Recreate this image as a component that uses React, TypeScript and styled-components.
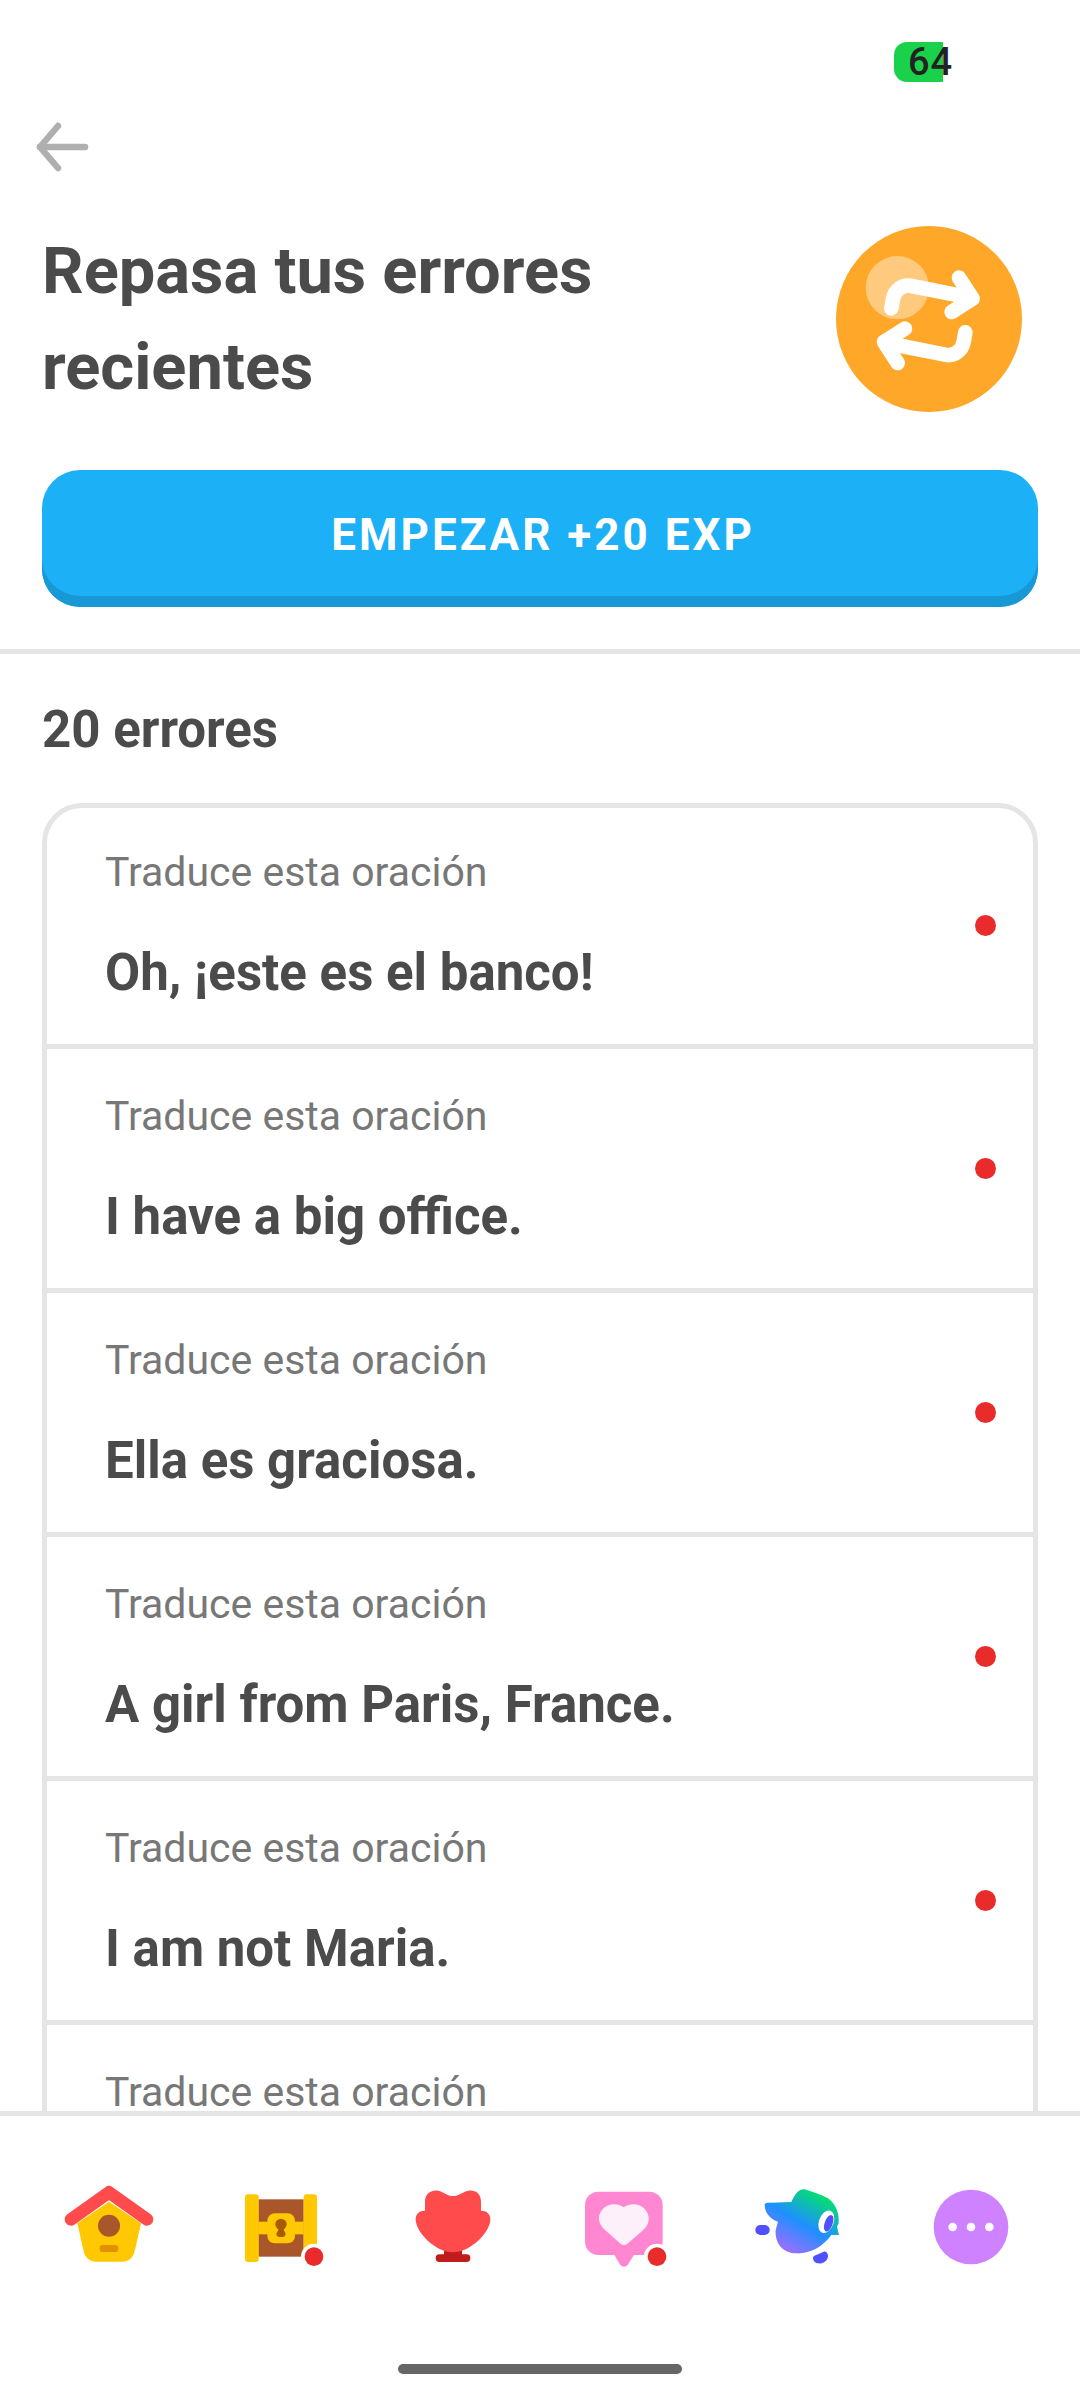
import React from "react";
import styled, { createGlobalStyle } from "styled-components";

const Global = createGlobalStyle`
  html, body { margin: 0; padding: 0; background: #fff; }
  * { box-sizing: border-box; }
`;

const Page = styled.div`
  width: 1080px;
  height: 2400px;
  display: flex;
  flex-direction: column;
  overflow: hidden;
  background: #fff;
  font-family: "Roboto", sans-serif;
  color: #4b4b4b;
`;

const StatusBar = styled.div`
  height: 122px;
  padding: 42px 0 0 894px;
`;

const Battery = styled.div`
  width: 49px;
  height: 40px;
  border-radius: 13px 0 0 13px;
  background: #1ad14b;
  padding-left: 14px;
  font: 500 38px/40px "Roboto", sans-serif;
  letter-spacing: 1px;
  color: #222;
  white-space: nowrap;
`;

const BackRow = styled.div`
  height: 104px;
  padding-left: 36px;
`;

const Hero = styled.div`
  display: flex;
  justify-content: space-between;
  padding: 0 58px 0 42px;
  height: 244px;
`;

const Title = styled.h1`
  margin: -3px 0 0;
  font-size: 65px;
  line-height: 96px;
  font-weight: 700;
`;

const PrimaryButton = styled.button`
  display: block;
  width: 996px;
  height: 137px;
  margin: 0 0 0 42px;
  padding: 0 0 7px 6px;
  border: 0;
  border-radius: 38px;
  background: #1cb0f6;
  box-shadow: inset 0 -11px 0 #1899d6;
  font-family: inherit;
  font-size: 44px;
  font-weight: 700;
  letter-spacing: 3px;
  color: #fff;
`;

const Divider = styled.div`
  height: 5px;
  margin-top: 42px;
  background: #e5e5e5;
  flex: none;
`;

const Scroll = styled.main`
  flex: 1;
  min-height: 0;
  overflow: hidden;
  padding: 48px 42px 0;
`;

const Count = styled.h2`
  margin: 0 0 45px;
  font-size: 51px;
  line-height: 56px;
  font-weight: 700;
`;

const List = styled.div`
  width: 996px;
  border: 5px solid #e5e5e5;
  border-radius: 40px;
`;

const RowText = styled.div`
  display: flex;
  flex-direction: column;
  align-self: flex-start;
  padding-top: 39px;
  gap: 45px;
`;

const Dot = styled.span`
  width: 21px;
  height: 21px;
  border-radius: 50%;
  background: #ea2b2b;
`;

const Row = styled.div`
  height: 244px;
  display: flex;
  align-items: center;
  justify-content: space-between;
  padding: 0 37px 0 58px;
  border-bottom: 5px solid #e5e5e5;

  &:first-child {
    height: 241px;
  }
  &:first-child ${RowText} {
    padding-top: 36px;
  }
  &:first-child ${Dot} {
    margin-bottom: 2px;
  }
`;

const RowLabel = styled.div`
  font-size: 41px;
  line-height: 56px;
  font-weight: 400;
  color: #777;
`;

const RowTitle = styled.div`
  font-size: 51px;
  line-height: 56px;
  font-weight: 700;
`;

const BottomNav = styled.nav`
  flex: none;
  height: 289px;
  border-top: 5px solid #e5e5e5;
  background: #fff;
  padding-top: 57px;
`;

const Tabs = styled.div`
  display: grid;
  grid-template-columns: repeat(6, 1fr);
  padding: 0 23px;
`;

const Tab = styled.div`
  height: 100px;
  display: flex;
  justify-content: center;
`;

const HomeBar = styled.div`
  width: 284px;
  height: 10px;
  margin: 91px auto 0;
  border-radius: 5px;
  background: #666;
`;

const Badge = ({ cx, cy }: { cx: number; cy: number }) => (
  <>
    <circle cx={cx} cy={cy} r="39" fill="#fff" />
    <circle cx={cx} cy={cy} r="28" fill="#ea2b2b" />
  </>
);

const BackIcon = () => (
  <svg width="56" height="56" viewBox="0 0 56 56" fill="none" stroke="#afafaf" strokeWidth="6.5" strokeLinecap="round" strokeLinejoin="round">
    <path d="M4 25 H49" />
    <path d="M22 4 L4 25 L22 46" />
  </svg>
);

const arrowPaths = (
  <>
    <path d="M274 864 L279 836 C284 810 306 791 335 797 L495 829" />
    <path d="M477 772 L518 835 L455 875" />
  </>
);

const RepeatIcon = () => (
  <svg width="186" height="186" viewBox="108 617 558 558">
    <circle cx="387" cy="896" r="279" fill="#ffa729" />
    <circle cx="292" cy="802" r="95" fill="#fff" fillOpacity="0.4" />
    <g fill="none" stroke="#fff" strokeWidth="44" strokeLinecap="round" strokeLinejoin="round">
      {arrowPaths}
    </g>
    <g transform="rotate(180 385 900)" fill="none" stroke="#fff" strokeWidth="44" strokeLinecap="round" strokeLinejoin="round">
      {arrowPaths}
    </g>
  </svg>
);

const HomeIcon = () => (
  <svg width="100" height="100" viewBox="177 249 300 300">
    <path d="M232 400 L327 335 L423 400 L405 480 C400 502 388 515 367 515 H288 C267 515 255 502 250 480 Z" fill="#ffc800" />
    <circle cx="327" cy="407" r="33" fill="#a9572a" />
    <rect x="299" y="465" width="56" height="21" rx="10" fill="#e09000" />
    <path d="M213 388 L327 307 L441 388" fill="none" stroke="#ff4b4b" strokeWidth="38" strokeLinecap="round" strokeLinejoin="round" />
  </svg>
);

const ChestIcon = () => (
  <svg width="100" height="100" viewBox="693 249 300 300">
    <rect x="775" y="328" width="136" height="172" fill="#a9572a" />
    <rect x="735" y="313" width="41" height="203" rx="9" fill="#ffc800" />
    <rect x="911" y="313" width="40" height="203" rx="9" fill="#ffc800" />
    <rect x="775" y="395" width="136" height="38" fill="#ffc800" />
    <rect x="802" y="370" width="83" height="90" rx="22" fill="#ffc800" />
    <circle cx="843" cy="403" r="17" fill="#a85b00" />
    <path d="M838 412 H849 L853 424 C860 432 856 441 848 441 H838 C830 441 826 432 833 424 Z" fill="#a85b00" />
    <Badge cx={942} cy={500} />
  </svg>
);

const TrophyIcon = () => (
  <svg width="100" height="100" viewBox="132 249 300 300">
    <path d="M252 478 H306 V496 H252 Z" fill="#c01c1c" />
    <rect x="227" y="493" width="104" height="23" rx="11" fill="#c01c1c" />
    <path d="M195 362 V335 C195 310 215 299 235 302 C250 305 262 318 279 318 C296 318 308 305 325 302 C345 299 363 310 363 335 V362 C380 362 392 372 391 390 C388 430 330 487 279 487 C228 487 170 430 167 390 C166 372 178 362 195 362 Z" fill="#ff4b4b" />
  </svg>
);

const HeartIcon = () => (
  <svg width="100" height="100" viewBox="648 249 300 300">
    <rect x="675" y="305" width="233" height="190" rx="40" fill="#ff86d0" />
    <path d="M760 490 H825 L805 522 C798 533 786 533 779 522 Z" fill="#ff86d0" />
    <path d="M791 352 C775 340 745 338 728 358 C710 378 714 402 735 420 L780 460 C787 467 797 467 804 460 L850 420 C870 402 872 378 855 358 C838 338 808 340 791 352 Z" fill="#fef0fa" />
    <Badge cx={891} cy={500} />
  </svg>
);

const DuoIcon = () => (
  <svg width="100" height="100" viewBox="85 249 300 300">
    <defs>
      <linearGradient id="duo-body" x1="0.2" y1="0.95" x2="0.8" y2="0.05">
        <stop offset="0" stopColor="#a56cff" />
        <stop offset="0.48" stopColor="#1e90ff" />
        <stop offset="1" stopColor="#00e860" />
      </linearGradient>
    </defs>
    <path d="M135 345 C135 338 145 338 150 338 L215 336 C222 320 235 295 255 298 C275 305 300 312 325 325 C345 340 360 365 357 400 L352 410 L358 435 L335 435 C310 470 270 492 230 490 C190 490 165 460 168 420 L175 395 C155 390 135 370 135 345 Z" fill="url(#duo-body)" />
    <ellipse cx="320" cy="395" rx="22" ry="35" transform="rotate(20 320 395)" fill="#fff" />
    <ellipse cx="327" cy="400" rx="12" ry="26" transform="rotate(20 327 400)" fill="#5050ff" />
    <rect x="107" y="405" width="43" height="30" rx="15" fill="#5050ff" />
    <path d="M280 503 C280 498 285 496 292 494 L312 485 C320 482 326 492 325 500 C322 515 308 522 295 520 C286 519 280 512 280 503 Z" fill="#5050ff" />
  </svg>
);

const MoreIcon = () => (
  <svg width="100" height="100" viewBox="603 249 300 300">
    <circle cx="753" cy="411" r="112" fill="#ce82ff" />
    <circle cx="698" cy="411" r="13" fill="#fff" />
    <circle cx="753" cy="411" r="13" fill="#fff" />
    <circle cx="808" cy="411" r="13" fill="#fff" />
  </svg>
);

const errors = [
  "Oh, ¡este es el banco!",
  "I have a big office.",
  "Ella es graciosa.",
  "A girl from Paris, France.",
  "I am not Maria.",
  null,
];

export default function App() {
  return (
    <Page>
      <Global />
      <StatusBar>
        <Battery>64</Battery>
      </StatusBar>
      <BackRow>
        <BackIcon />
      </BackRow>
      <Hero>
        <Title>
          Repasa tus errores
          <br />
          recientes
        </Title>
        <RepeatIcon />
      </Hero>
      <PrimaryButton>EMPEZAR +20 EXP</PrimaryButton>
      <Divider />
      <Scroll>
        <Count>20 errores</Count>
        <List>
          {errors.map((text, i) => (
            <Row key={i}>
              <RowText>
                <RowLabel>Traduce esta oración</RowLabel>
                {text && <RowTitle>{text}</RowTitle>}
              </RowText>
              <Dot />
            </Row>
          ))}
        </List>
      </Scroll>
      <BottomNav>
        <Tabs>
          <Tab><HomeIcon /></Tab>
          <Tab><ChestIcon /></Tab>
          <Tab><TrophyIcon /></Tab>
          <Tab><HeartIcon /></Tab>
          <Tab><DuoIcon /></Tab>
          <Tab><MoreIcon /></Tab>
        </Tabs>
        <HomeBar />
      </BottomNav>
    </Page>
  );
}
